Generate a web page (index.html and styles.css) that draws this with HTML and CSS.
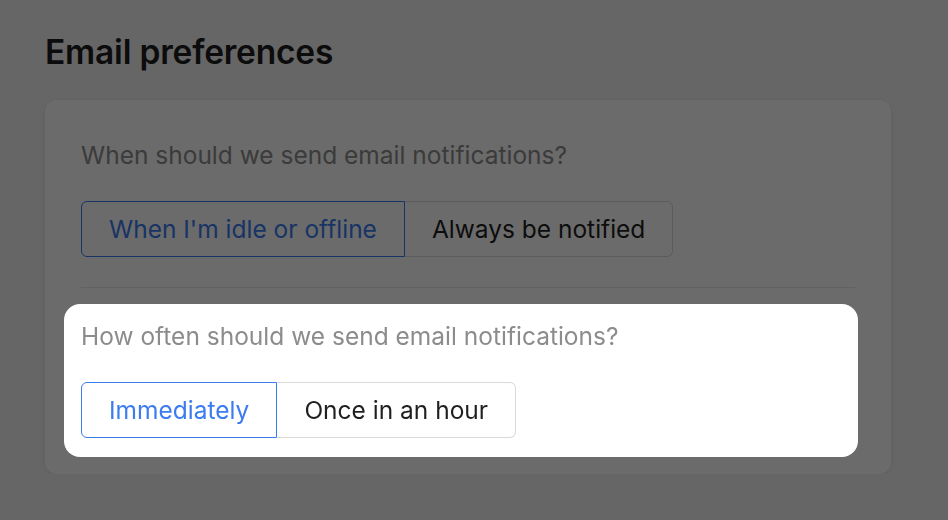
FILE: index.html
```html
<!DOCTYPE html>
<html lang="en">
<head>
<meta charset="utf-8">
<title>Email preferences</title>
<link rel="stylesheet" href="styles.css">
</head>
<body>
<main class="page">
  <h1 class="title">Email preferences</h1>
  <div class="card">
    <section class="section">
      <p class="question">When should we send email notifications?</p>
      <div class="segmented">
        <button class="seg seg-active">When I'm idle or offline</button>
        <button class="seg">Always be notified</button>
      </div>
    </section>
    <section class="section section-focus">
      <div class="spotlight" aria-hidden="true"></div>
      <div class="section-body">
        <p class="question">How often should we send email notifications?</p>
        <div class="segmented">
          <button class="seg seg-active">Immediately</button>
          <button class="seg">Once in an hour</button>
        </div>
      </div>
    </section>
  </div>
</main>
<div class="overlay" aria-hidden="true"></div>
</body>
</html>
```

FILE: styles.css
```css
* { box-sizing: border-box; }

html, body {
  margin: 0;
  padding: 0;
  background: #f2f2f2;
  font-family: "Inter", "Liberation Sans", sans-serif;
}

.page {
  padding: 32px 57px 0 45px;
}

.title {
  margin: 0 0 27px 0;
  font-size: 33.5px;
  line-height: 41px;
  font-weight: 600;
  color: #1d1d1f;
  letter-spacing: -0.2px;
}

.card {
  background: #ffffff;
  border-radius: 12px;
  box-shadow: 0 1px 4px rgba(0, 0, 0, 0.08);
  padding: 37px 36px 36px 36px;
}

.section {
  padding-bottom: 30px;
  border-bottom: 1px solid #e6e6e6;
}

.section-focus {
  position: relative;
  padding-top: 30px;
  padding-bottom: 0;
  border-bottom: none;
}

.overlay {
  position: fixed;
  inset: 0;
  background: rgba(0, 0, 0, 0.58);
  z-index: 1;
}

.spotlight {
  position: absolute;
  top: 16px;
  bottom: -19px;
  left: -17px;
  right: -3px;
  background: #ffffff;
  border-radius: 16px;
  z-index: 2;
}

.section-body {
  position: relative;
  z-index: 3;
}

.question {
  margin: 0 0 28px 0;
  font-size: 24.5px;
  line-height: 36px;
  color: #8c8c8c;
}

.segmented {
  display: flex;
}

.seg {
  height: 56px;
  padding: 0 27px;
  font-family: inherit;
  font-size: 24.5px;
  color: #1f1f1f;
  background: #ffffff;
  border: 1px solid #d9d9d9;
  margin: 0;
  cursor: pointer;
}

.seg:first-child {
  border-radius: 6px 0 0 6px;
}

.seg:last-child {
  border-radius: 0 6px 6px 0;
  border-left: none;
}

.seg-active {
  color: #3b7cf0;
  border-color: #3b7cf0;
}
```
